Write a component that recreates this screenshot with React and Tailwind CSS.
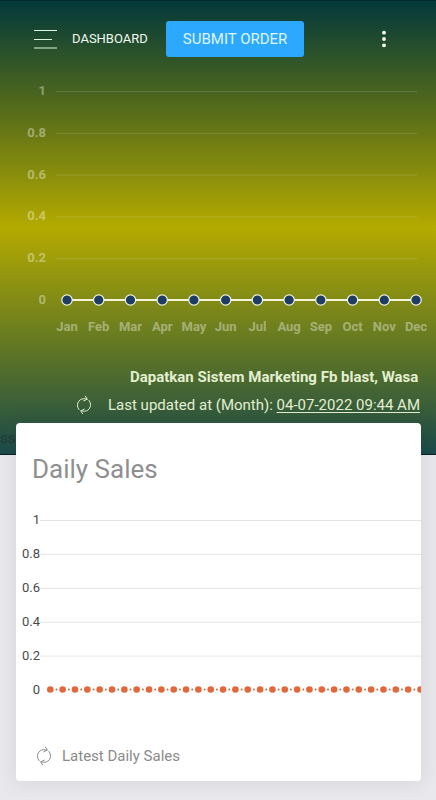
import React from "react";

const months = ["Jan", "Feb", "Mar", "Apr", "May", "Jun", "Jul", "Aug", "Sep", "Oct", "Nov", "Dec"];
const ticks = ["1", "0.8", "0.6", "0.4", "0.2", "0"];
const days = Array.from({ length: 31 }, (_, i) => i);

const RefreshIcon = ({ className }) => (
  <svg
    viewBox="0 0 16 20"
    className={className}
    fill="none"
    stroke="currentColor"
    strokeWidth="1"
    strokeLinecap="round"
    strokeLinejoin="round"
    aria-hidden="true"
  >
    <path d="M3 14.6A6.6 6.6 0 0 1 4.2 4.8C6 3.6 8.4 3.4 11 4.2" />
    <path d="M9.4 1.2L11.2 4.2L7.8 5.8" />
    <path d="M13 5.4A6.6 6.6 0 0 1 11.8 15.2C10 16.4 7.6 16.6 5 15.8" />
    <path d="M6.6 18.8L4.8 15.8L8.2 14.2" />
  </svg>
);

const NavBar = () => (
  <nav className="flex items-center pt-5 pl-[34px] pr-[46px]">
    <button type="button" aria-label="Toggle sidebar" className="text-[#e2f3e0]">
      <svg viewBox="0 0 24 20" className="h-5 w-6" stroke="currentColor" strokeWidth="1">
        <path d="M0 1.5H23M0 10.5H18M0 19H23" />
      </svg>
    </button>
    <a href="#dashboard" className="ml-[14px] text-[13px] leading-5 text-[#f0faf0]">
      DASHBOARD
    </a>
    <button
      type="button"
      className="ml-[18px] h-9 rounded-[3px] bg-[#2ca8ff] px-[17px] text-[15px] leading-5 whitespace-nowrap text-[#dff6ff]"
    >
      SUBMIT ORDER
    </button>
    <button type="button" aria-label="More options" className="ml-auto">
      <svg viewBox="0 0 12 18" className="h-[18px] w-3" fill="#fffef0">
        <circle cx="6" cy="2.7" r="1.9" />
        <circle cx="6" cy="9" r="1.9" />
        <circle cx="6" cy="15.3" r="1.9" />
      </svg>
    </button>
  </nav>
);

const MonthlyChart = () => (
  <svg viewBox="0 0 436 280" className="block w-full" fontSize="13" fontWeight="700">
    {ticks.map((tick, i) => (
      <g key={tick}>
        {tick !== "0" && (
          <line x1="56" x2="417" y1={34.5 + i * 41.8} y2={34.5 + i * 41.8} stroke="#fff" strokeOpacity="0.14" />
        )}
        <text x="46" y={38 + i * 41.8} textAnchor="end" fill="#fff" fillOpacity="0.4">
          {tick}
        </text>
      </g>
    ))}
    <line x1="67" x2="416" y1="243" y2="243" stroke="#f5f3d8" strokeWidth="2" />
    {months.map((month, i) => (
      <g key={month}>
        <circle cx={67 + i * 31.73} cy="243" r="5.2" fill="#1e3d60" stroke="#f2f5e6" strokeWidth="1.2" />
        <text x={67 + i * 31.73} y="274" textAnchor="middle" fill="#fff" fillOpacity="0.4">
          {month}
        </text>
      </g>
    ))}
  </svg>
);

const DailyChart = () => (
  <svg viewBox="0 0 405 200" className="block w-full" fontSize="13" fill="#4a4a4a">
    {ticks.map((tick, i) => (
      <g key={tick}>
        {tick !== "0" && (
          <line x1="24" x2="405" y1={20.5 + i * 33.9} y2={20.5 + i * 33.9} stroke="#e5e5e5" />
        )}
        <text x="24" y={24 + i * 33.9} textAnchor="end">
          {tick}
        </text>
      </g>
    ))}
    {days.map((day) => (
      <g key={day}>
        <circle cx={34.3 + day * 12.34} cy="189.5" r="3.3" fill="#e2673a" />
        <circle cx={40.5 + day * 12.34} cy="189.5" r="1" fill="#b5704c" />
      </g>
    ))}
  </svg>
);

const App = () => (
  <div className="min-h-screen bg-[#e9e8ed] pb-[18px] font-['Roboto',sans-serif]">
    <header className="relative overflow-hidden border-t border-b border-t-[#062b30] border-b-[#0b2022] bg-[linear-gradient(to_bottom,#03393a_0%,#596e19_25%,#b4aa00_50%,#5c7426_78%,#1a4a4a_100%)] pb-[35px]">
      <NavBar />
      <MonthlyChart />
      <div className="pr-4 text-[15px] leading-7 text-[#e3efd0]">
        <p className="mt-[26px] ml-[130px] overflow-hidden font-bold whitespace-nowrap">
          Dapatkan Sistem Marketing Fb blast, Wasa
        </p>
        <p className="flex items-center justify-end whitespace-nowrap">
          <RefreshIcon className="mr-4 h-5 w-4" />
          <span>
            Last updated at (Month): <u className="underline-offset-2">04-07-2022 09:44 AM</u>
          </span>
        </p>
      </div>
      <span className="absolute bottom-[6px] left-0 text-[15px] leading-5 text-[#203a38]">ss</span>
    </header>
    <section className="relative mr-[15px] ml-4 -mt-8 overflow-hidden rounded bg-white shadow-[0_1px_20px_3px_rgba(0,0,0,0.07)]">
      <h2 className="px-4 pt-7 text-[26px] leading-9 text-[#8f8f8f]">Daily Sales</h2>
      <div className="mt-[13px]">
        <DailyChart />
      </div>
      <footer className="mt-11 flex items-center px-5 pb-[13px] text-[15px] leading-6 text-[#8b8b8b]">
        <RefreshIcon className="mr-[10px] h-5 w-4" />
        Latest Daily Sales
      </footer>
    </section>
  </div>
);

export default App;
